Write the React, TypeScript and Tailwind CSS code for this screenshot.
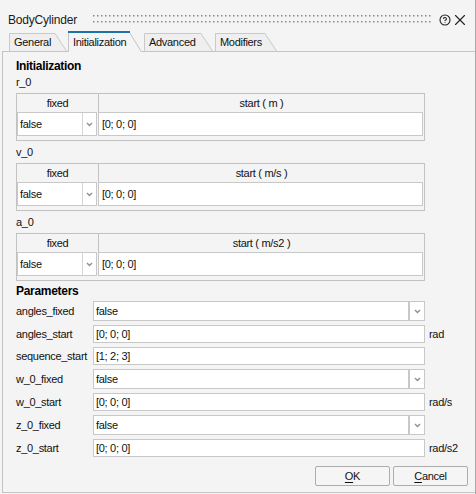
import { CircleHelp, X } from "lucide-react";

function Chevron() {
  return (
    <svg width="7" height="5" viewBox="0 0 7 5" className="block">
      <path d="M1 1l2.5 2.5L6 1" fill="none" stroke="#8f8f8f" strokeWidth="1.4" />
    </svg>
  );
}

function Tab({ label, w, flat, cls, active }: { label: string; w: number; flat: number; cls: string; active?: boolean }) {
  if (active) {
    return (
      <div className={`relative h-[21px] -mb-px flex items-center ${cls}`}>
        <svg width={w} height="21" className="absolute inset-0">
          <path d={`M0 21V0H${flat}L${w} 21Z`} fill="#f4f4f4" />
          <path d={`M0.5 21V0.5H${flat}L${w - 0.5} 21`} fill="none" stroke="#c4c4c4" />
          <rect x="0" y="0" width={flat + 1} height="2" fill="#1e73a6" />
        </svg>
        <span className="relative pl-[5px] pt-[1px]">{label}</span>
      </div>
    );
  }
  return (
    <div className={`relative h-[18px] flex items-center ${cls}`}>
      <svg width={w} height="18" className="absolute inset-0">
        <path d={`M0 18V0H${flat}L${w} 18Z`} fill="#efefef" />
        <path d={`M0.5 18V0.5H${flat}L${w - 0.5} 18`} fill="none" stroke="#c9c9c9" />
      </svg>
      <span className="relative pl-[5px]">{label}</span>
    </div>
  );
}

function VecTable({ label, unit, first }: { label: string; unit: string; first?: boolean }) {
  return (
    <div className={first ? "mt-[3px]" : "mt-[5px]"}>
      <div className="h-[13px] leading-[13px] mb-[4px]">{label}</div>
      <div className="w-[409px] border border-[#c2c2c2] pb-[4px]">
        <div className="flex h-[18px]">
          <div className="w-[82px] border-r border-[#c2c2c2] text-center leading-[18px]">fixed</div>
          <div className="flex-1 text-center leading-[18px]">start ( {unit} )</div>
        </div>
        <div className="flex h-[24px]">
          <div className="w-[80px] flex border border-[#c8c8c8] bg-white">
            <div className="flex-1 pl-[2px] leading-[22px]">false</div>
            <div className="w-[14px] border-l border-[#d6d6d6] flex items-center justify-center">
              <Chevron />
            </div>
          </div>
          <div className="ml-[1px] w-[325px] border border-[#c8c8c8] bg-white pl-[3px] leading-[22px]">[0; 0; 0]</div>
        </div>
      </div>
    </div>
  );
}

function ParamCombo({ label, value }: { label: string; value: string }) {
  return (
    <div className="flex h-[20px] items-center">
      <div className="w-[77px]">{label}</div>
      <div className="flex h-full">
        <div className="w-[316px] border border-[#c8c8c8] bg-white pl-[2px] leading-[18px]">{value}</div>
        <div className="w-[16px] border border-[#c8c8c8] bg-white flex items-center justify-center">
          <Chevron />
        </div>
      </div>
    </div>
  );
}

function ParamInput({ label, value, unit }: { label: string; value: string; unit?: string }) {
  return (
    <div className="flex h-[18px] items-center">
      <div className="w-[77px]">{label}</div>
      <div className="w-[332px] h-full border border-[#c8c8c8] bg-white pl-[2px] leading-[16px]">{value}</div>
      {unit && <div className="ml-[4px]">{unit}</div>}
    </div>
  );
}

export default function App() {
  return (
    <div className="w-[476px] h-[494px] bg-[#f4f4f4] border-r border-[#a9a9a9] font-['Liberation_Sans',Arial,sans-serif] text-[11px] tracking-[-0.3px] text-[#111] overflow-hidden">
      {/* title bar */}
      <div className="flex h-[31px] items-center pt-[8px] pl-[8px]">
        <div className="w-[85px] text-[12px] tracking-[-0.2px] text-[#1a1a1a] leading-[14px]">BodyCylinder</div>
        <svg width="338" height="8" className="block mb-[2px]">
          <defs>
            <pattern id="grip" width="4" height="6" patternUnits="userSpaceOnUse">
              <rect width="1.5" height="1.5" fill="#8a8a8a" />
            </pattern>
          </defs>
          <rect width="338" height="8" fill="url(#grip)" />
        </svg>
        <CircleHelp size={12} strokeWidth={2.2} className="ml-[8px] text-[#222]" />
        <X size={18} strokeWidth={1.5} className="text-[#222]" />
      </div>

      {/* tabs */}
      <div className="relative z-10 flex items-end h-[20px] pl-[9px]">
        <Tab label="General" w={58} flat={46} cls="w-[58px]" />
        <Tab label="Initialization" w={74} flat={61} cls="w-[74px] ml-[1px]" active />
        <Tab label="Advanced" w={69} flat={57} cls="w-[69px] ml-[2px]" />
        <Tab label="Modifiers" w={62} flat={50} cls="w-[62px] ml-[2px]" />
      </div>

      {/* panel */}
      <div className="ml-[2px] h-[442px] border-t border-l border-b border-[#c4c4c4] pt-[7px] pl-[13px]">
        <div className="h-[14px] leading-[14px] text-[12px] font-bold text-black">Initialization</div>
        <VecTable label="r_0" unit="m" first />
        <VecTable label="v_0" unit="m/s" />
        <VecTable label="a_0" unit="m/s2" />

        <div className="mt-[3px] h-[14px] leading-[14px] text-[12px] font-bold text-black">Parameters</div>
        <div className="mt-[3px] flex flex-col gap-[4px]">
          <ParamCombo label="angles_fixed" value="false" />
          <ParamInput label="angles_start" value="[0; 0; 0]" unit="rad" />
          <ParamInput label="sequence_start" value="[1; 2; 3]" />
          <ParamCombo label="w_0_fixed" value="false" />
          <ParamInput label="w_0_start" value="[0; 0; 0]" unit="rad/s" />
          <ParamCombo label="z_0_fixed" value="false" />
          <ParamInput label="z_0_start" value="[0; 0; 0]" unit="rad/s2" />
        </div>

        <div className="mt-[9px] flex justify-end gap-[3px] pr-[7px]">
          <button className="w-[75px] h-[20px] rounded-[2px] border border-[#adadad] bg-[#f5f5f5] leading-[18px] text-[#111]">
            <span className="underline underline-offset-[2px]">O</span>K
          </button>
          <button className="w-[75px] h-[20px] rounded-[2px] border border-[#adadad] bg-[#f5f5f5] leading-[18px] text-[#111]">
            <span className="underline underline-offset-[2px]">C</span>ancel
          </button>
        </div>
      </div>
    </div>
  );
}
